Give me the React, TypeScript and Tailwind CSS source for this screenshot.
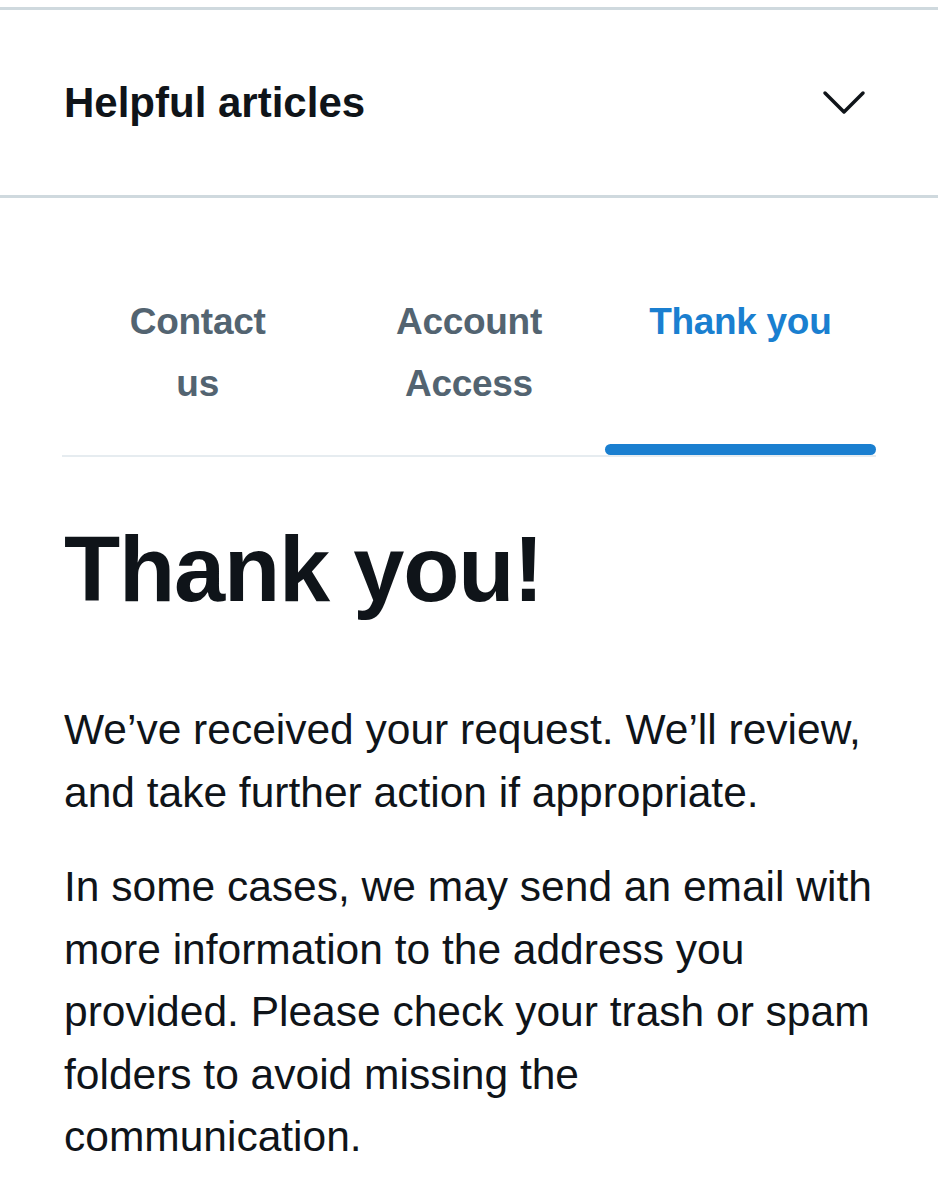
import React from 'react';

const tabs = [
  { lines: ['Contact', 'us'], active: false },
  { lines: ['Account', 'Access'], active: false },
  { lines: ['Thank you'], active: true },
];

const App: React.FC = () => {
  return (
    <div className="min-h-[1200px] bg-white pt-[7px] text-[#0f1419]" style={{ fontFamily: '"Liberation Sans", Arial, sans-serif' }}>
      {/* 折叠标题 */}
      <div className="flex h-[191px] items-center justify-between border-y-[3px] border-[#cfd9de] pl-[64px] pr-[72px]">
        <span className="text-[42px] font-bold leading-none">Helpful articles</span>
        <svg width="44" height="26" viewBox="0 0 44 26" fill="none" stroke="#0f1419" strokeWidth="3.5" strokeLinecap="round" strokeLinejoin="round">
          <path d="M3 3 L22 22 L41 3" />
        </svg>
      </div>

      {/* 选项卡 */}
      <div className="mx-[62px] mt-[93px] flex border-b-2 border-[#e6ecf0]">
        {tabs.map((t) => (
          <div key={t.lines.join(' ')} className="flex flex-1 flex-col items-center">
            <div
              className={`text-center text-[37px] font-bold leading-[62px] tracking-[-0.3px] ${
                t.active ? 'text-[#1a7fd0]' : 'text-[#536471]'
              }`}
            >
              {t.lines.map((l) => (
                <div key={l}>{l}</div>
              ))}
            </div>
            <div className="mt-auto h-[29px]" />
            <div className={`h-[11px] w-full rounded-full ${t.active ? 'bg-[#1a7fd0]' : 'bg-transparent'}`} />
          </div>
        ))}
      </div>

      {/* 内容 */}
      <div className="px-[64px]">
        <h1 className="mt-[62px] text-[92px] font-bold leading-[1.1] tracking-[-1.2px]">Thank you!</h1>
        <p className="mt-[78px] text-[42.5px] leading-[63px]">
          We’ve received your request. We’ll review,
          <br />
          and take further action if appropriate.
        </p>
        <p className="mt-[32px] text-[42.5px] leading-[62.5px]">
          In some cases, we may send an email with
          <br />
          more information to the address you
          <br />
          provided. Please check your trash or spam
          <br />
          folders to avoid missing the
          <br />
          communication.
        </p>
      </div>
    </div>
  );
};

export default App;
